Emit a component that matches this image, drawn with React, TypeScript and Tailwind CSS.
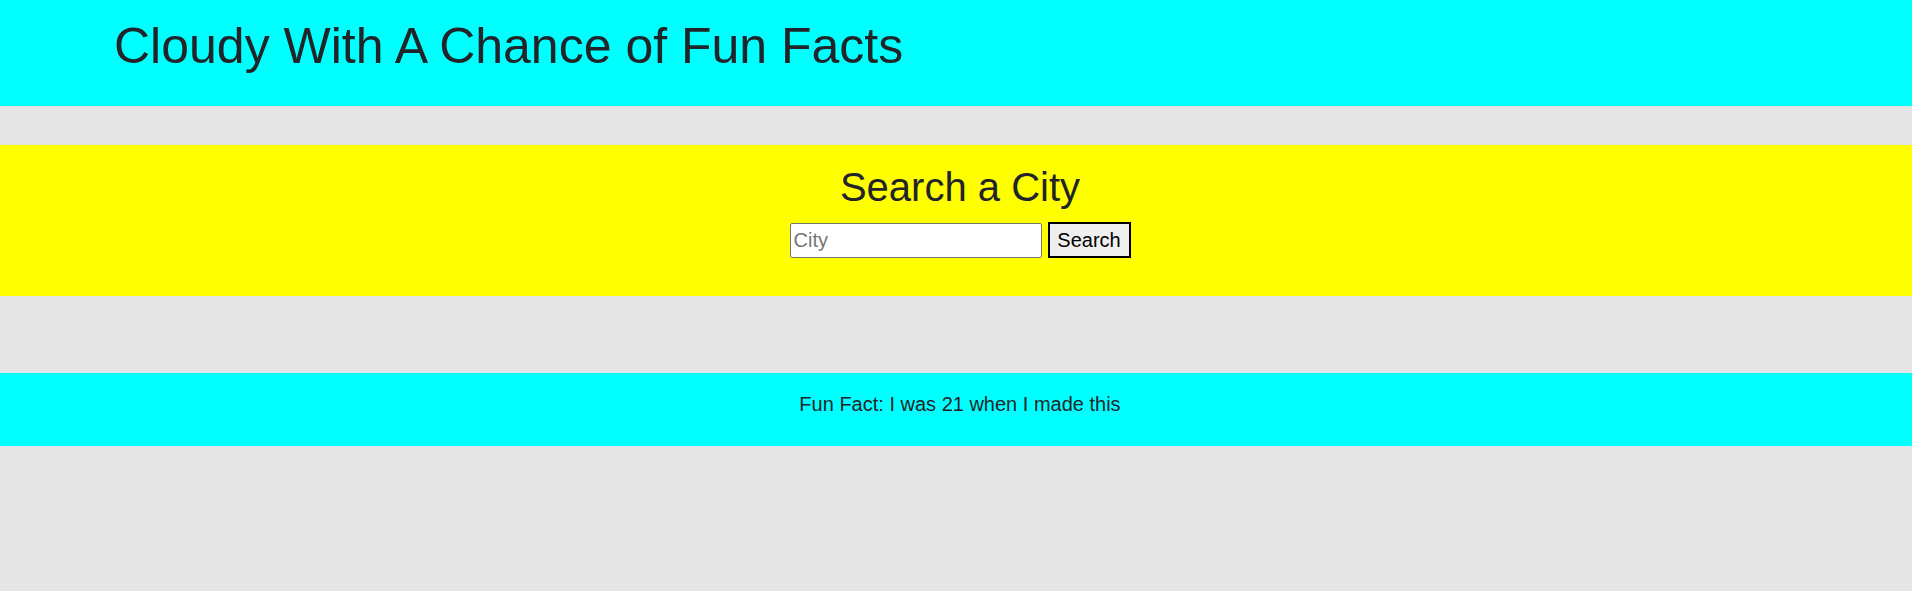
import React from "react";

export default function App() {
  return (
    <div
      className="min-h-[591px] w-full bg-[#e5e5e5] text-[#212529]"
      style={{ fontFamily: '"Liberation Sans", Arial, sans-serif' }}
    >
      <header className="h-[106px] bg-[#00ffff] pl-[114px] pt-[18px]">
        <h1 className="m-0 text-[50px] font-normal leading-[56px]">
          Cloudy With A Chance of Fun Facts
        </h1>
      </header>

      <section className="mt-[39px] bg-[#ffff00] pl-[8px] pt-[18px] pb-[38px]">
        <h2 className="m-0 text-center text-[40px] font-normal leading-[48px]">
          Search a City
        </h2>
        <form
          className="mt-[11px] flex items-center justify-center gap-[6px]"
          onSubmit={(e) => e.preventDefault()}
        >
          <input
            type="text"
            placeholder="City"
            className="box-border h-[35px] w-[252px] rounded-[2px] border border-[#767676] bg-white px-[3px] text-[20px] text-black placeholder:text-[#757575] outline-none"
          />
          <button
            type="submit"
            className="box-border h-[36px] w-[83px] border-2 border-black bg-[#efefef] px-[6px] text-[20px] text-black"
          >
            Search
          </button>
        </form>
      </section>

      <footer className="mt-[77px] h-[73px] bg-[#00ffff] pl-[8px] pt-[16px]">
        <p className="m-0 text-center text-[20px] leading-[30px]">
          Fun Fact: I was 21 when I made this
        </p>
      </footer>
    </div>
  );
}
